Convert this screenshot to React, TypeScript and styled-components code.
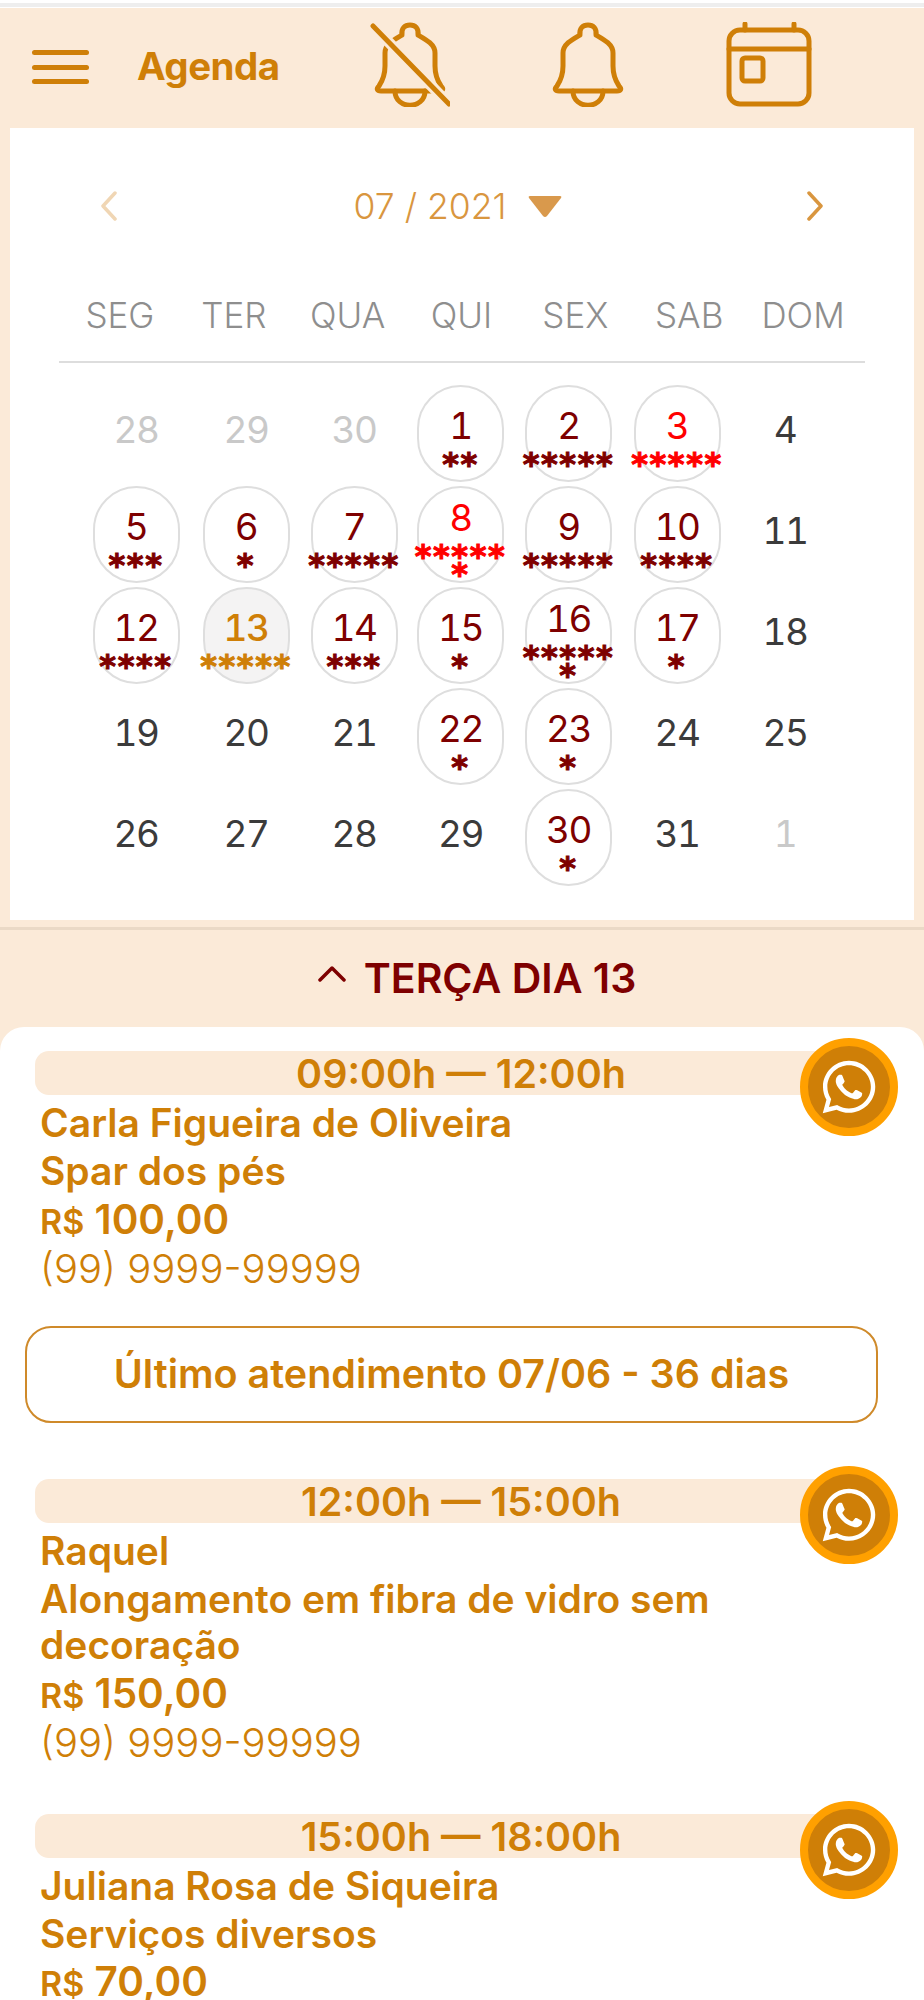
import styled, { createGlobalStyle } from 'styled-components';
import { FaWhatsapp } from 'react-icons/fa';

const ORANGE = '#cf7f07';
const DARK_RED = '#7e0000';
const RED = '#ff0000';
const CREAM = '#fbead8';

type Tone = 'muted' | 'plain' | 'busy' | 'alert' | 'today';

interface DayData {
  label: number;
  tone: Tone;
  stars?: number;
}

const toneColor: Record<Tone, string> = {
  muted: '#c9c9c9',
  plain: '#3b3b3b',
  busy: DARK_RED,
  alert: RED,
  today: ORANGE,
};

const DAYS: DayData[] = [
  { label: 28, tone: 'muted' },
  { label: 29, tone: 'muted' },
  { label: 30, tone: 'muted' },
  { label: 1, tone: 'busy', stars: 2 },
  { label: 2, tone: 'busy', stars: 5 },
  { label: 3, tone: 'alert', stars: 5 },
  { label: 4, tone: 'plain' },
  { label: 5, tone: 'busy', stars: 3 },
  { label: 6, tone: 'busy', stars: 1 },
  { label: 7, tone: 'busy', stars: 5 },
  { label: 8, tone: 'alert', stars: 6 },
  { label: 9, tone: 'busy', stars: 5 },
  { label: 10, tone: 'busy', stars: 4 },
  { label: 11, tone: 'plain' },
  { label: 12, tone: 'busy', stars: 4 },
  { label: 13, tone: 'today', stars: 5 },
  { label: 14, tone: 'busy', stars: 3 },
  { label: 15, tone: 'busy', stars: 1 },
  { label: 16, tone: 'busy', stars: 6 },
  { label: 17, tone: 'busy', stars: 1 },
  { label: 18, tone: 'plain' },
  { label: 19, tone: 'plain' },
  { label: 20, tone: 'plain' },
  { label: 21, tone: 'plain' },
  { label: 22, tone: 'busy', stars: 1 },
  { label: 23, tone: 'busy', stars: 1 },
  { label: 24, tone: 'plain' },
  { label: 25, tone: 'plain' },
  { label: 26, tone: 'plain' },
  { label: 27, tone: 'plain' },
  { label: 28, tone: 'plain' },
  { label: 29, tone: 'plain' },
  { label: 30, tone: 'busy', stars: 1 },
  { label: 31, tone: 'plain' },
  { label: 1, tone: 'muted' },
];

const WEEKDAYS = ['SEG', 'TER', 'QUA', 'QUI', 'SEX', 'SAB', 'DOM'];

const APPOINTMENTS = [
  {
    time: '09:00h — 12:00h',
    client: 'Carla Figueira de Oliveira',
    service: 'Spar dos pés',
    price: '100,00',
    phone: '(99) 9999-99999',
    last: 'Último atendimento 07/06 - 36 dias',
  },
  {
    time: '12:00h — 15:00h',
    client: 'Raquel',
    service: 'Alongamento em fibra de vidro sem decoração',
    price: '150,00',
    phone: '(99) 9999-99999',
  },
  {
    time: '15:00h — 18:00h',
    client: 'Juliana Rosa de Siqueira',
    service: 'Serviços diversos',
    price: '70,00',
    phone: '(99) 9999-99999',
  },
];

const BELL_BODY =
  'M6 64 C10 58 12 52 12 44 L12 31 C12 22 22 17 29 13 C28 6 32 3 37 3 C42 3 46 6 45 13 C52 17 62 22 62 31 L62 44 C62 52 64 58 68 64 C71 67 70 69 66 69 L8 69 C4 69 3 67 6 64 Z';

const BellIcon = () => (
  <HeaderIcon width="74" height="85" viewBox="0 0 74 85">
    <path d={BELL_BODY} />
    <path d="M22 69 C22 88 52 88 52 69" />
  </HeaderIcon>
);

const BellOffIcon = () => (
  <HeaderIcon width="80" height="85" viewBox="-3 0 80 85">
    <path d={BELL_BODY} />
    <path d="M22 69 C22 88 52 88 52 69" />
    <path d="M0 4 L76 82" stroke={CREAM} strokeWidth="11" />
    <path d="M0 4 L76 82" />
  </HeaderIcon>
);

const CalendarIcon = () => (
  <HeaderIcon width="86" height="85" viewBox="0 0 86 85">
    <rect x="3" y="8" width="80" height="74" rx="11" />
    <path d="M3 27 H83" />
    <path d="M19 2 V8 M68 2 V8" />
    <rect x="16" y="36" width="21" height="23" rx="3" />
  </HeaderIcon>
);

const App = () => (
  <Page>
    <GlobalStyle />
    <TopStrip />
    <Header>
      <MenuButton>
        <span />
        <span />
        <span />
      </MenuButton>
      <HeaderTitle>Agenda</HeaderTitle>
      <HeaderIcons>
        <BellOffIcon />
        <BellIcon />
        <CalendarIcon />
      </HeaderIcons>
    </Header>

    <CalendarCard>
      <MonthRow>
        <Chevron width="17" height="30" viewBox="0 0 17 30" $faded>
          <path d="M15 2 L3 15 L15 28" />
        </Chevron>
        <MonthLabel>
          07 / 2021
          <MonthCaret width="34" height="23" viewBox="0 0 34 23">
            <path d="M2 1 H32 Q34 1 33 3 L19 21 Q17 23 15 21 L1 3 Q0 1 2 1 Z" />
          </MonthCaret>
        </MonthLabel>
        <Chevron width="17" height="30" viewBox="0 0 17 30">
          <path d="M2 2 L14 15 L2 28" />
        </Chevron>
      </MonthRow>

      <WeekRow>
        {WEEKDAYS.map((day) => (
          <WeekDay key={day}>{day}</WeekDay>
        ))}
      </WeekRow>

      <DayGrid>
        {DAYS.map((day, index) =>
          day.stars ? (
            <DayCircle key={index} $today={day.tone === 'today'}>
              <DayNumber $tone={day.tone}>{day.label}</DayNumber>
              <Stars $tone={day.tone}>{'*'.repeat(day.stars)}</Stars>
            </DayCircle>
          ) : (
            <PlainDay key={index}>
              <DayNumber $tone={day.tone}>{day.label}</DayNumber>
            </PlainDay>
          ),
        )}
      </DayGrid>
    </CalendarCard>

    <DayBar>
      <DayBarCaret width="28" height="17" viewBox="0 0 28 17">
        <path d="M2 15 L14 3 L26 15" />
      </DayBarCaret>
      TERÇA DIA 13
    </DayBar>

    <ListPanel>
      {APPOINTMENTS.map((item) => (
        <Appointment key={item.time}>
          <TimeBar>{item.time}</TimeBar>
          <WhatsButton>
            <FaWhatsapp size={60} color="#fff" />
          </WhatsButton>
          <InfoLine>{item.client}</InfoLine>
          <ServiceLine>{item.service}</ServiceLine>
          <PriceLine>
            <Currency>R$</Currency> {item.price}
          </PriceLine>
          <PhoneLine>{item.phone}</PhoneLine>
          {item.last && <LastVisit>{item.last}</LastVisit>}
        </Appointment>
      ))}
    </ListPanel>
  </Page>
);

export default App;

const GlobalStyle = createGlobalStyle`
  html, body {
    margin: 0;
    padding: 0;
    background: #fff;
  }
  * {
    box-sizing: border-box;
  }
`;

const Page = styled.div`
  width: 924px;
  height: 2000px;
  overflow: hidden;
  background: ${CREAM};
  font-family: Inter, 'Liberation Sans', sans-serif;
`;

const TopStrip = styled.div`
  height: 8px;
  padding-top: 3px;
  background: #fff;
  &::before {
    content: '';
    display: block;
    height: 4px;
    background: #eeeeee;
  }
`;

const Header = styled.header`
  display: flex;
  align-items: center;
  height: 120px;
  padding: 0 0 8px 32px;
`;

const MenuButton = styled.div`
  display: flex;
  flex-direction: column;
  justify-content: space-between;
  width: 57px;
  height: 34px;
  margin-top: 6px;
  span {
    display: block;
    height: 5px;
    border-radius: 3px;
    background: ${ORANGE};
  }
`;

const HeaderTitle = styled.h1`
  margin: 4px 0 0 48px;
  font-size: 38.5px;
  font-weight: 700;
  letter-spacing: -0.5px;
  color: ${ORANGE};
`;

const HeaderIcons = styled.div`
  display: flex;
  align-items: center;
  margin-left: 90px;
  gap: 101px;
`;

const HeaderIcon = styled.svg`
  fill: none;
  stroke: ${ORANGE};
  stroke-width: 5;
  stroke-linecap: round;
  stroke-linejoin: round;
  flex: none;
`;

const CalendarCard = styled.section`
  margin: 0 10px;
  padding: 58px 0 34px;
  background: #fff;
`;

const MonthRow = styled.div`
  display: flex;
  align-items: center;
  justify-content: space-between;
  height: 40px;
  padding: 0 90px;
`;

const Chevron = styled.svg<{ $faded?: boolean }>`
  fill: none;
  stroke: ${({ $faded }) => ($faded ? '#f0d6b4' : '#d9963f')};
  stroke-width: 3.5;
  stroke-linecap: round;
  stroke-linejoin: round;
`;

const MonthLabel = styled.div`
  display: flex;
  align-items: center;
  gap: 22px;
  padding-right: 8px;
  font-size: 35.5px;
  font-weight: 300;
  color: #d9963f;
`;

const MonthCaret = styled.svg`
  fill: #d9994c;
`;

const WeekRow = styled.div`
  display: grid;
  grid-template-columns: repeat(7, 1fr);
  height: 68px;
  margin: 69px 49px 0;
  padding: 0 5px 26px 4px;
  border-bottom: 2px solid #dddddd;
`;

const WeekDay = styled.div`
  text-align: center;
  font-size: 35px;
  line-height: 40px;
  font-weight: 300;
  color: #8e8e8e;
`;

const DayGrid = styled.div`
  display: grid;
  grid-template-columns: 110px 110px 106px 107px 109px 108px 108px;
  grid-auto-rows: 97px;
  row-gap: 4px;
  margin: 22px 0 0 71px;
`;

const PlainDay = styled.div`
  display: flex;
  align-items: center;
  justify-content: center;
  padding-bottom: 7px;
`;

const DayCircle = styled.div<{ $today?: boolean }>`
  display: flex;
  flex-direction: column;
  align-items: center;
  justify-content: center;
  justify-self: center;
  width: 87px;
  height: 97px;
  padding-top: 3px;
  border: 2px solid #dedede;
  border-radius: 44px;
  background: ${({ $today }) => ($today ? '#f4f3f3' : 'transparent')};
`;

const DayNumber = styled.span<{ $tone: Tone }>`
  font-size: 37px;
  line-height: 44px;
  letter-spacing: -1.5px;
  font-weight: ${({ $tone }) => ($tone === 'today' ? 500 : 400)};
  font-variant-numeric: tabular-nums;
  color: ${({ $tone }) => toneColor[$tone]};
`;

const Stars = styled.span<{ $tone: Tone }>`
  width: 100px;
  transform: translateY(7px);
  text-align: center;
  word-break: break-all;
  font-family: 'DejaVu Sans', sans-serif;
  font-size: 32px;
  font-weight: 700;
  line-height: 18px;
  letter-spacing: 1.6px;
  -webkit-text-stroke: 1px ${({ $tone }) => toneColor[$tone]};
  color: ${({ $tone }) => toneColor[$tone]};
`;

const DayBar = styled.div`
  display: flex;
  align-items: center;
  justify-content: center;
  gap: 18px;
  height: 101px;
  padding: 0 0 2px 30px;
  margin-top: 7px;
  border-top: 3px solid #ead9c6;
  font-size: 41px;
  font-weight: 600;
  color: ${DARK_RED};
`;

const DayBarCaret = styled.svg`
  margin-bottom: 10px;
  fill: none;
  stroke: ${DARK_RED};
  stroke-width: 3.5;
  stroke-linecap: round;
  stroke-linejoin: round;
`;

const ListPanel = styled.div`
  margin-top: -1px;
  padding-top: 24px;
  border-radius: 24px 24px 0 0;
  background: #fff;
`;

const Appointment = styled.article`
  position: relative;
  padding: 0 124px 0 40px;
  margin-bottom: 46px;
`;

const TimeBar = styled.div`
  height: 44px;
  margin: 0 -87px 3px -5px;
  border-radius: 14px;
  background: ${CREAM};
  text-align: center;
  font-size: 39.5px;
  line-height: 46px;
  font-weight: 600;
  color: ${ORANGE};
`;

const WhatsButton = styled.div`
  position: absolute;
  top: -13px;
  left: 800px;
  display: flex;
  align-items: center;
  justify-content: center;
  width: 98px;
  height: 98px;
  border: 8px solid #ffa000;
  border-radius: 50%;
  background: ${ORANGE};
`;

const InfoLine = styled.div`
  font-size: 39px;
  line-height: 49px;
  font-weight: 600;
  color: ${ORANGE};
`;

const ServiceLine = styled(InfoLine)`
  margin: 1px 0;
  line-height: 46.5px;
`;

const PriceLine = styled.div`
  font-size: 40.5px;
  line-height: 47.5px;
  font-weight: 600;
  color: ${ORANGE};
`;

const Currency = styled.span`
  font-size: 34px;
`;

const PhoneLine = styled.div`
  font-size: 40px;
  line-height: 48.5px;
  font-weight: 300;
  color: ${ORANGE};
`;

const LastVisit = styled.div`
  display: flex;
  align-items: center;
  justify-content: center;
  width: 853px;
  height: 97px;
  margin: 32px 0 56px -15px;
  border: 2px solid #cf8a2a;
  border-radius: 26px;
  font-size: 39.5px;
  font-weight: 600;
  color: ${ORANGE};
`;
